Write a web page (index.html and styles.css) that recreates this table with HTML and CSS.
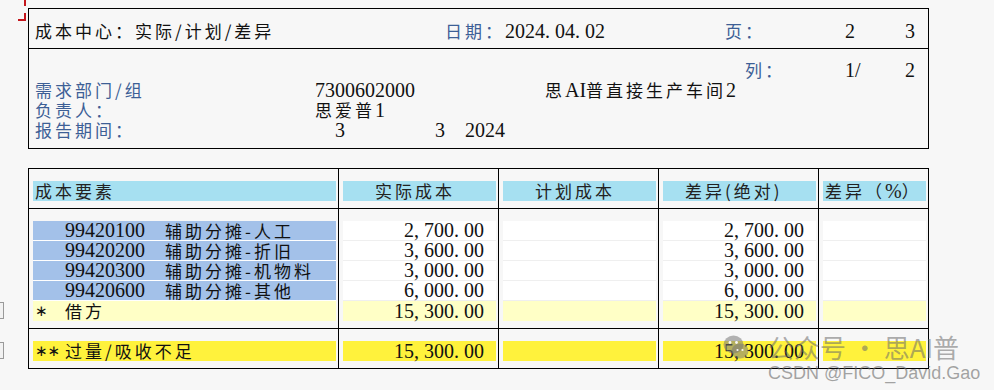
FILE: index.html
```html
<!DOCTYPE html>
<html lang="zh">
<head>
<meta charset="utf-8">
<title>成本中心：实际/计划/差异</title>
<link rel="stylesheet" href="styles.css">
</head>
<body>
<div class="page">
  <div class="mark mark-a"></div>
  <div class="mark mark-b"></div>
  <div class="sel sel-a"></div>
  <div class="sel sel-b"></div>

  <div class="hbox">
    <div class="hsec hsec-title">
      <div class="line">
        <span class="w410">成本中心：实际/计划/差异</span><span class="w60 lbl">日期：</span><span class="w220 n">2024<span class="pt">.</span>04<span class="pt">.</span>02</span><span class="w120 lbl">页：</span><span class="w60 n">2</span><span class="n">3</span>
      </div>
    </div>
    <div class="hsec hsec-info">
      <div class="line"><span class="w710"></span><span class="w100 lbl">列：</span><span class="w60 n">1/</span><span class="n">2</span></div>
      <div class="line"><span class="w280 lbl">需求部门/组</span><span class="w230 n">7300602000</span><span>思<span class="n">AI</span>普直接生产车间<span class="n">2</span></span></div>
      <div class="line"><span class="w280 lbl">负责人：</span><span>思爱普<span class="n">1</span></span></div>
      <div class="line"><span class="w300 lbl">报告期间：</span><span class="w100 n">3</span><span class="w30 n">3</span><span class="n">2024</span></div>
    </div>
  </div>

  <div class="tbl">
    <div class="sec">
      <div class="cell"><div class="bar cyan pl2">成本要素</div></div>
      <div class="cell"><div class="bar cyan pl32">实际成本</div></div>
      <div class="cell"><div class="bar cyan pl32">计划成本</div></div>
      <div class="cell"><div class="bar cyan pl22">差异(绝对)</div></div>
      <div class="cell"><div class="bar cyan pl2">差异（<span class="n">%</span>）</div></div>
    </div>
    <div class="sec">
      <div class="cell">
        <div class="row blue sep"><span class="code n">99420100</span><span>辅助分摊-人工</span></div>
        <div class="row blue sep"><span class="code n">99420200</span><span>辅助分摊-折旧</span></div>
        <div class="row blue sep"><span class="code n">99420300</span><span>辅助分摊-机物料</span></div>
        <div class="row blue sep"><span class="code n">99420600</span><span>辅助分摊-其他</span></div>
        <div class="row lyellow"><span class="star n">∗</span><span>借方</span></div>
      </div>
      <div class="cell">
        <div class="row white sep amt"><span class="n">2<span class="pt">,</span>700<span class="pt">.</span>00</span></div>
        <div class="row white sep amt"><span class="n">3<span class="pt">,</span>600<span class="pt">.</span>00</span></div>
        <div class="row white sep amt"><span class="n">3<span class="pt">,</span>000<span class="pt">.</span>00</span></div>
        <div class="row white sep amt"><span class="n">6<span class="pt">,</span>000<span class="pt">.</span>00</span></div>
        <div class="row lyellow amt"><span class="n">15<span class="pt">,</span>300<span class="pt">.</span>00</span></div>
      </div>
      <div class="cell">
        <div class="row white sep"></div>
        <div class="row white sep"></div>
        <div class="row white sep"></div>
        <div class="row white sep"></div>
        <div class="row lyellow"></div>
      </div>
      <div class="cell">
        <div class="row white sep amt"><span class="n">2<span class="pt">,</span>700<span class="pt">.</span>00</span></div>
        <div class="row white sep amt"><span class="n">3<span class="pt">,</span>600<span class="pt">.</span>00</span></div>
        <div class="row white sep amt"><span class="n">3<span class="pt">,</span>000<span class="pt">.</span>00</span></div>
        <div class="row white sep amt"><span class="n">6<span class="pt">,</span>000<span class="pt">.</span>00</span></div>
        <div class="row lyellow amt"><span class="n">15<span class="pt">,</span>300<span class="pt">.</span>00</span></div>
      </div>
      <div class="cell">
        <div class="row white sep"></div>
        <div class="row white sep"></div>
        <div class="row white sep"></div>
        <div class="row white sep"></div>
        <div class="row lyellow"></div>
      </div>
    </div>
    <div class="sec">
      <div class="cell"><div class="row yellow"><span class="star n">∗∗</span><span>过量/吸收不足</span></div></div>
      <div class="cell"><div class="row yellow amt"><span class="n">15<span class="pt">,</span>300<span class="pt">.</span>00</span></div></div>
      <div class="cell"><div class="row yellow"></div></div>
      <div class="cell"><div class="row yellow amt"><span class="n">15<span class="pt">,</span>300<span class="pt">.</span>00</span></div></div>
      <div class="cell"><div class="row yellow"></div></div>
    </div>
  </div>

  <div class="wm">
    <div class="wm-top">
      <svg class="wm-icon" width="26" height="26" viewBox="0 0 26 26">
        <ellipse cx="10.5" cy="10.5" rx="10" ry="9" fill="rgba(120,120,120,0.55)"/>
        <ellipse cx="17" cy="17" rx="8.5" ry="7.5" fill="rgba(120,120,120,0.55)"/>
        <circle cx="7" cy="8.5" r="1.4" fill="#f7f7f7"/>
        <circle cx="13.5" cy="8.5" r="1.4" fill="#f7f7f7"/>
        <circle cx="14.5" cy="16" r="1.1" fill="#f7f7f7"/>
        <circle cx="19.5" cy="16" r="1.1" fill="#f7f7f7"/>
      </svg>
      <span class="wm-text">公众号 · 思AI普</span>
    </div>
    <div class="wm-sub">CSDN @FICO_David.Gao</div>
  </div>
</div>
</body>
</html>
```

FILE: styles.css
```css
html, body {
  margin: 0;
  padding: 0;
  background: #f7f7f7;
}
body {
  font-family: "Noto Sans CJK SC", sans-serif;
  font-size: 17px;
  letter-spacing: 3px;
  color: #111;
}
.page {
  position: relative;
  width: 994px;
  height: 390px;
  padding: 8px 0 0 28px;
  box-sizing: border-box;
  overflow: hidden;
}
.n {
  font-family: "Liberation Serif", serif;
  font-size: 20px;
  letter-spacing: 0;
}
.pt {
  display: inline-block;
  width: 10px;
}
.lbl { color: #3d5f96; }

/* decorations in the left margin */
.mark { position: absolute; }
.mark-a {
  left: 24px; top: 0;
  width: 2px; height: 6px;
  background: #c4161c;
}
.mark-b {
  left: 18px; top: 13px;
  width: 6px; height: 6px;
  border-right: 2px solid #c4161c;
  border-bottom: 2px solid #c4161c;
}
.sel {
  position: absolute;
  left: -10px;
  width: 12px; height: 15px;
  border: 1px solid #9a9a9a;
  background: #f2f2f2;
}
.sel-a { top: 302px; }
.sel-b { top: 342px; }

/* header box */
.hbox {
  width: 901px;
  box-sizing: border-box;
  border: 1px solid #000;
}
.hsec-title {
  padding: 12px 0 7px 6px;
  border-bottom: 1px solid #000;
}
.hsec-info {
  padding: 11px 0 8px 6px;
}
.line {
  display: flex;
  height: 20px;
  line-height: 20px;
  white-space: nowrap;
}
.line > span { flex: none; }
.w30 { width: 30px; }
.w60 { width: 60px; }
.w100 { width: 100px; }
.w120 { width: 120px; }
.w220 { width: 220px; }
.w230 { width: 230px; }
.w280 { width: 280px; }
.w300 { width: 300px; }
.w410 { width: 410px; }
.w710 { width: 710px; }

/* table */
.tbl {
  margin-top: 19px;
  width: 901px;
  box-sizing: border-box;
  border: 1px solid #000;
}
.sec {
  display: grid;
  grid-template-columns: 310px 160px 160px 160px 109px;
  border-bottom: 1px solid #000;
}
.sec:last-child { border-bottom: none; }
.cell {
  box-sizing: border-box;
  padding: 12px 2px 7px 4px;
  border-right: 1px solid #000;
}
.cell:last-child { border-right: none; }
.bar {
  height: 20px;
  line-height: 20px;
  white-space: nowrap;
  color: #222;
}
.cyan { background: #a6e0f1; }
.pl2 { padding-left: 2px; }
.pl22 { padding-left: 22px; }
.pl32 { padding-left: 32px; }

.row {
  display: flex;
  height: 20px;
  line-height: 20px;
  box-sizing: border-box;
  white-space: nowrap;
}
.row.sep { border-bottom: 1px solid #fff; line-height: 19px; }
.row.white.sep { border-bottom-color: #efefef; }
.blue { background: #a3c1e9; }
.white { background: #fff; }
.lyellow { background: #ffffc6; }
.yellow { background: #fff23c; }
.amt {
  justify-content: flex-end;
  padding-right: 12px;
}
.code {
  width: 100px;
  padding-left: 32px;
  flex: none;
}
.star {
  width: 30px;
  padding-left: 2px;
  flex: none;
  font-family: "DejaVu Sans", sans-serif;
  font-size: 15px;
}

/* watermark */
.wm {
  position: absolute;
  left: 723px;
  top: 333px;
  font-family: "Noto Sans CJK SC", sans-serif;
  letter-spacing: 0;
  white-space: nowrap;
}
.wm-top {
  display: flex;
  align-items: center;
  gap: 19px;
  height: 28px;
}
.wm-icon { flex: none; }
.wm-text {
  font-size: 26px;
  line-height: 28px;
  color: rgba(105,105,105,0.55);
}
.wm-sub {
  margin-left: 45px;
  font-family: "Liberation Sans", sans-serif;
  font-size: 18px;
  line-height: 18px;
  margin-top: 3px;
  color: rgba(105,105,105,0.6);
}
```
